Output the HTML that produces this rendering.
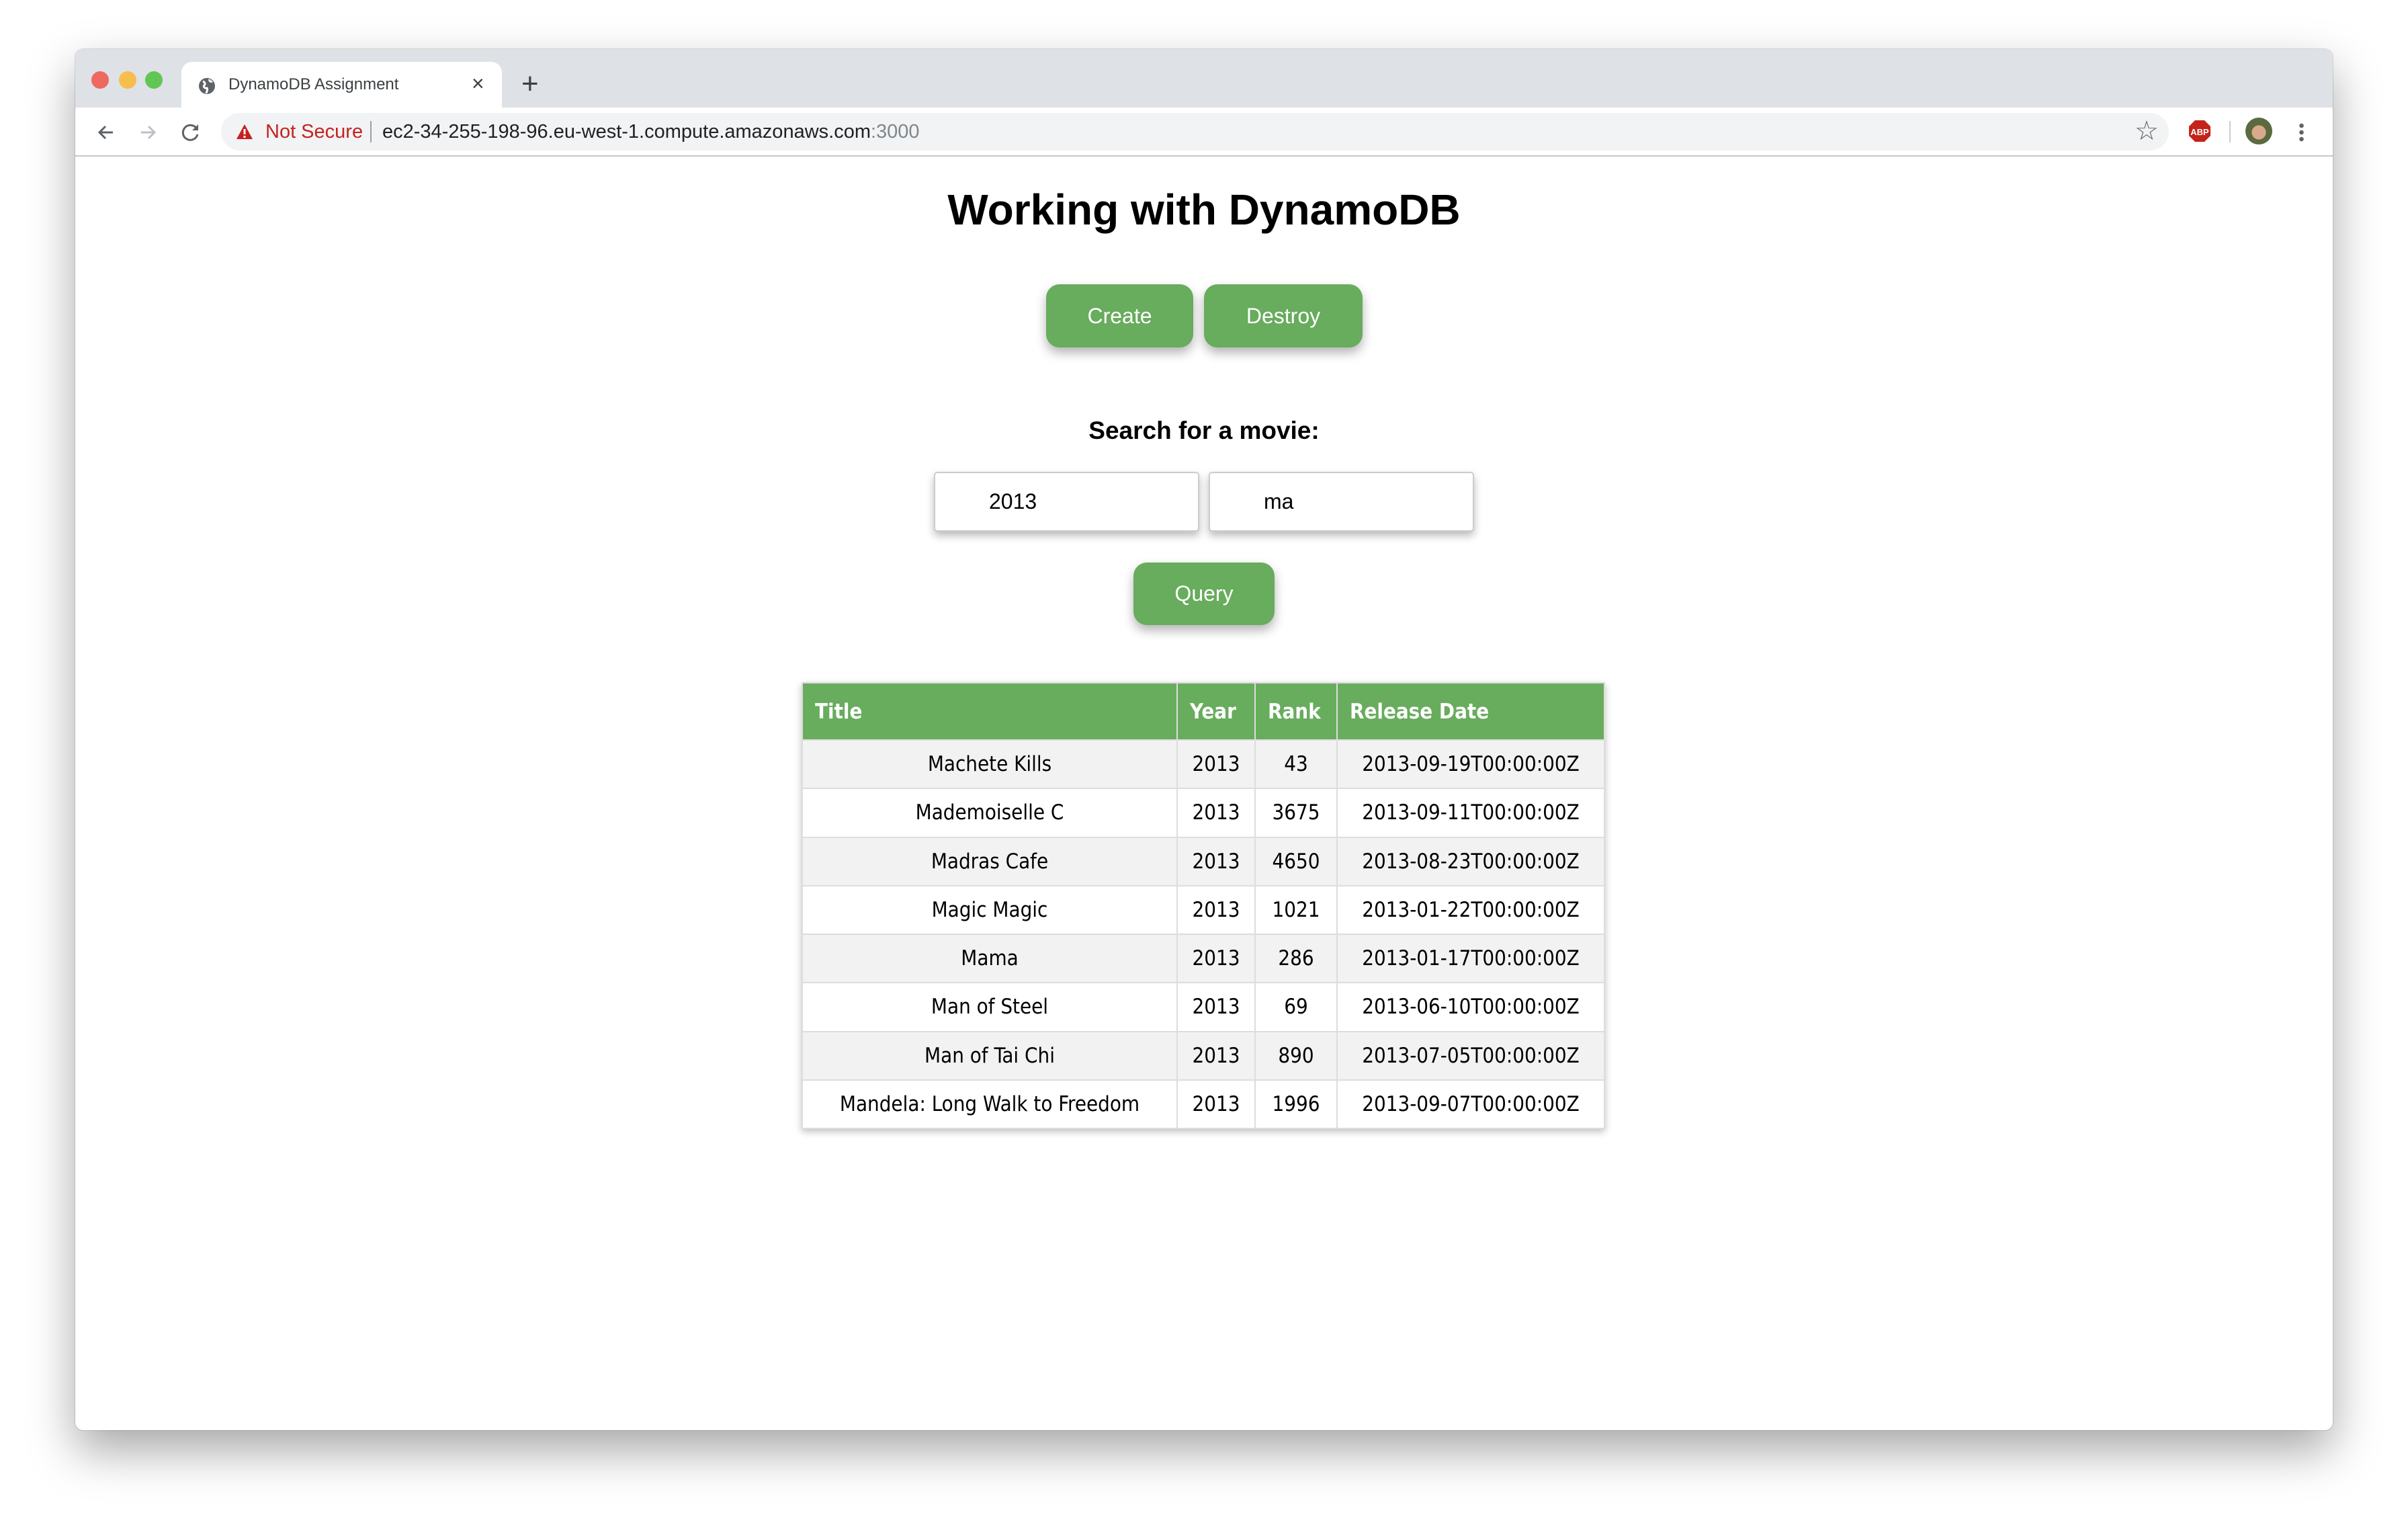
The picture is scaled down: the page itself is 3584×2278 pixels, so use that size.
<!DOCTYPE html>
<html><head><meta charset="utf-8"><style>
*{margin:0;padding:0;box-sizing:border-box}
body{width:3584px;height:2278px;background:#fff;position:relative;overflow:hidden;font-family:"Liberation Sans",sans-serif}
.win{position:absolute;left:112px;top:73px;width:3360px;height:2055px;background:#fff;border-radius:12px;box-shadow:0 30px 70px rgba(0,0,0,.35),0 0 0 1px rgba(0,0,0,.12);overflow:hidden}
.tabbar{position:absolute;left:0;top:0;width:100%;height:87px;background:#dee1e6}
.dot{position:absolute;top:33px;width:26px;height:26px;border-radius:50%}
.tab{position:absolute;left:158px;top:19px;width:477px;height:70px;background:#fff;border-radius:16px 16px 0 0}
.toolbar{position:absolute;left:0;top:87px;width:100%;height:73px;background:#fff;border-bottom:2px solid #c8c8c8}
.pill{position:absolute;left:217px;top:8px;width:2899px;height:56px;background:#f1f3f4;border-radius:28px}
.abs{position:absolute}
.btn{position:absolute;background:#68ac5d;color:#fff;border-radius:20px;font-size:32px;display:flex;align-items:center;justify-content:center;box-shadow:0 8px 16px rgba(0,0,0,.3)}
.inp{position:absolute;background:#fff;border:2px solid #ccc;border-radius:5px;font-size:32px;box-shadow:0 6px 12px rgba(0,0,0,.28);display:flex;align-items:center}
table{position:absolute;left:1193px;top:1015px;width:1196px;border-collapse:collapse;font-family:"DejaVu Sans Condensed","Liberation Sans",sans-serif;font-size:31px;box-shadow:0 4px 10px rgba(0,0,0,.25)}
th{background:#68ac5d;color:#fff;text-align:left;height:85px;padding:0 18px;border:2px solid #ddd;font-weight:bold}
td{height:72.25px;text-align:center;border:2px solid #ddd;color:#000}
tr:nth-child(even) td{background:#f2f2f2}
</style></head><body>
<div class="win">
 <div class="tabbar">
  <div class="dot" style="left:24px;background:#ee6a5f"></div>
  <div class="dot" style="left:65px;background:#f5be4f"></div>
  <div class="dot" style="left:104px;background:#62c655"></div>
  <div class="tab">
   <svg class="abs" style="left:24px;top:22px" width="28" height="28" viewBox="0 0 28 28"><circle cx="14" cy="14" r="12" fill="#5f6368"/><path d="M8 7c3 1 4 4 2 6s1 5 4 4c2 3-1 6-1 8M18 4c-1 3 2 4 4 3" stroke="#fff" stroke-width="3" fill="none"/></svg>
   <div class="abs" style="left:70px;top:20px;font-size:24px;color:#3c4043">DynamoDB Assignment</div>
   <div class="abs" style="left:432px;top:14px;font-size:32px;color:#3c4043">×</div>
  </div>
  <div class="abs" style="left:664px;top:30px;font-size:44px;color:#3c4043;line-height:44px">+</div>
 </div>
 <div class="toolbar">
  <svg class="abs" style="left:30px;top:22px" width="30" height="30" viewBox="0 0 30 30"><path d="M26 15H6M15 6l-9 9 9 9" stroke="#5f6368" stroke-width="3" fill="none"/></svg>
  <svg class="abs" style="left:94px;top:22px" width="30" height="30" viewBox="0 0 30 30"><path d="M4 15h20M15 6l9 9-9 9" stroke="#bdc1c6" stroke-width="3" fill="none"/></svg>
  <svg class="abs" style="left:157px;top:22px" width="30" height="30" viewBox="0 0 30 30"><path d="M24 10A11 11 0 1 0 25 18" stroke="#5f6368" stroke-width="3" fill="none"/><path d="M26 3v9h-9z" fill="#5f6368"/></svg>
  <div class="pill">
   <svg class="abs" style="left:22px;top:16px" width="26" height="24" viewBox="0 0 26 24"><path d="M13 1L25 23H1z" fill="#c5221f"/><path d="M13 8v8M13 18v3" stroke="#fff" stroke-width="3"/></svg>
   <div class="abs" style="left:66px;top:12px;font-size:29px;color:#c5221f">Not Secure</div>
   <div class="abs" style="left:222px;top:12px;width:2px;height:32px;background:#9aa0a6"></div>
   <div class="abs" style="left:240px;top:12px;font-size:29px;color:#202124">ec2-34-255-198-96.eu-west-1.compute.amazonaws.com<span style="color:#80868b">:3000</span></div>
   <div class="abs" style="left:2848px;top:4px;font-size:40px;color:#5f6368">☆</div>
  </div>
  <svg class="abs" style="left:3145px;top:18px" width="34" height="34" viewBox="0 0 34 34"><path d="M10 1h14l9 9v14l-9 9H10l-9-9V10z" fill="#c4231a"/><text x="17" y="23" font-family="Liberation Sans" font-weight="bold" font-size="13" fill="#fff" text-anchor="middle">ABP</text></svg>
  <div class="abs" style="left:3206px;top:20px;width:2px;height:32px;background:#ccc"></div>
  <div class="abs" style="left:3230px;top:15px;width:40px;height:40px;border-radius:50%;background:radial-gradient(circle at 50% 55%,#d9a98c 0 35%,#5b6a3f 36%)"></div>
  <div class="abs" style="left:3310px;top:22px;width:7px;height:30px;background:radial-gradient(circle,#5f6368 3px,transparent 3.5px) 0 0/7px 10px"></div>
 </div>
</div>
<div class="abs" style="left:0;width:3584px;top:275px;text-align:center;font-size:64px;font-weight:bold;color:#000">Working with DynamoDB</div>
<div class="btn" style="left:1557px;top:423px;width:219px;height:94px">Create</div>
<div class="btn" style="left:1792px;top:423px;width:236px;height:94px">Destroy</div>
<div class="abs" style="left:0;width:3584px;top:620px;text-align:center;font-size:37px;font-weight:bold;color:#000">Search for a movie:</div>
<div class="inp" style="left:1390px;top:702px;width:395px;height:89px;padding-left:80px">2013</div>
<div class="inp" style="left:1799px;top:702px;width:395px;height:89px;padding-left:80px">ma</div>
<div class="btn" style="left:1687px;top:837px;width:210px;height:93px">Query</div>
<table>
<tr><th style="width:558px">Title</th><th style="width:116px">Year</th><th style="width:122px">Rank</th><th>Release Date</th></tr>
<tr><td>Machete Kills</td><td>2013</td><td>43</td><td>2013-09-19T00:00:00Z</td></tr>
<tr><td>Mademoiselle C</td><td>2013</td><td>3675</td><td>2013-09-11T00:00:00Z</td></tr>
<tr><td>Madras Cafe</td><td>2013</td><td>4650</td><td>2013-08-23T00:00:00Z</td></tr>
<tr><td>Magic Magic</td><td>2013</td><td>1021</td><td>2013-01-22T00:00:00Z</td></tr>
<tr><td>Mama</td><td>2013</td><td>286</td><td>2013-01-17T00:00:00Z</td></tr>
<tr><td>Man of Steel</td><td>2013</td><td>69</td><td>2013-06-10T00:00:00Z</td></tr>
<tr><td>Man of Tai Chi</td><td>2013</td><td>890</td><td>2013-07-05T00:00:00Z</td></tr>
<tr><td>Mandela: Long Walk to Freedom</td><td>2013</td><td>1996</td><td>2013-09-07T00:00:00Z</td></tr>
</table>
</body></html>
